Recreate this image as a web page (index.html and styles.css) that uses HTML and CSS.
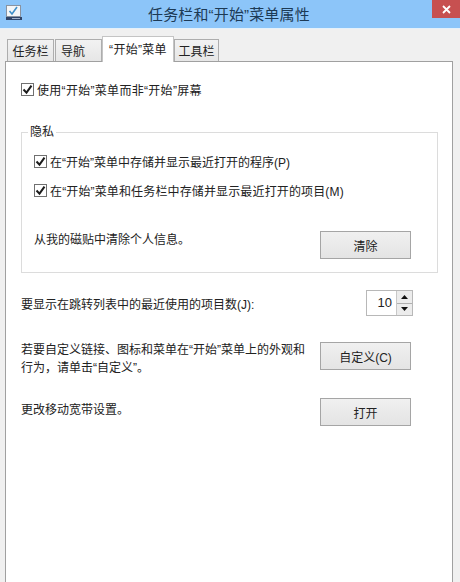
FILE: index.html
```html
<!DOCTYPE html>
<html lang="zh-CN">
<head>
<meta charset="utf-8">
<title>任务栏和“开始”菜单属性</title>
<link rel="stylesheet" href="styles.css">
</head>
<body>
<div class="window">
  <header class="titlebar">
    <svg class="app-icon" width="16" height="16" viewBox="0 0 16 16">
      <rect x="0.5" y="0.5" width="14" height="11" fill="#f4f6f8" stroke="#8a93a0"/>
      <path d="M3.5 6l2.5 3 5-7" fill="none" stroke="#3f8fc8" stroke-width="1.6"/>
      <rect x="0" y="12" width="16" height="3" fill="#2f4468"/>
      <rect x="6" y="13" width="8" height="1" fill="#9fb0c8"/>
    </svg>
    <h1 class="title">任务栏和“开始”菜单属性</h1>
    <button class="close" aria-label="关闭">
      <svg width="9" height="9" viewBox="0 0 9 9"><path d="M1 1l7 7M8 1l-7 7" stroke="#fff" stroke-width="1.8"/></svg>
    </button>
  </header>
  <nav class="tabs">
    <span class="tab tab-a">任务栏</span>
    <span class="tab tab-b">导航</span>
    <span class="tab active">“开始”菜单</span>
    <span class="tab tab-c">工具栏</span>
  </nav>
  <main class="panel">
    <label class="check first">
      <span class="box"><svg width="11" height="11" viewBox="0 0 11 11"><path d="M1.5 5.5l3 3.2 5-7" fill="none" stroke="#1c1c1c" stroke-width="2"/></svg></span>
      使用“开始”菜单而非“开始”屏幕
    </label>
    <section class="group">
      <span class="legend">隐私</span>
      <label class="check">
        <span class="box"><svg width="11" height="11" viewBox="0 0 11 11"><path d="M1.5 5.5l3 3.2 5-7" fill="none" stroke="#1c1c1c" stroke-width="2"/></svg></span>
        在“开始”菜单中存储并显示最近打开的程序(P)
      </label>
      <label class="check second">
        <span class="box"><svg width="11" height="11" viewBox="0 0 11 11"><path d="M1.5 5.5l3 3.2 5-7" fill="none" stroke="#1c1c1c" stroke-width="2"/></svg></span>
        在“开始”菜单和任务栏中存储并显示最近打开的项目(M)
      </label>
      <div class="row clear-row">
        <span class="line">从我的磁贴中清除个人信息。</span>
        <button class="btn">清除</button>
      </div>
    </section>
    <div class="row count-row">
      <span>要显示在跳转列表中的最近使用的项目数(J):</span>
      <div class="spin">
        <span class="spin-value">10</span>
        <span class="spin-arrows">
          <span class="arrow"><svg width="7" height="4" viewBox="0 0 7 4"><path d="M3.5 0L7 4H0z" fill="#111"/></svg></span>
          <span class="arrow"><svg width="7" height="4" viewBox="0 0 7 4"><path d="M0 0h7L3.5 4z" fill="#111"/></svg></span>
        </span>
      </div>
    </div>
    <div class="row custom-row">
      <span class="line wrap">若要自定义链接、图标和菜单在“开始”菜单上的外观和<br>行为，请单击“自定义”。</span>
      <button class="btn">自定义(C)</button>
    </div>
    <div class="row open-row">
      <span class="line open-text">更改移动宽带设置。</span>
      <button class="btn">打开</button>
    </div>
  </main>
</div>
</body>
</html>
```
FILE: styles.css
```css
* { box-sizing: border-box; }
html, body { margin: 0; height: 100%; }
body {
  width: 460px;
  height: 582px;
  overflow: hidden;
  font-family: "Liberation Sans", "Noto Sans CJK SC", sans-serif;
  font-size: 12px;
  color: #222;
  background: #f0f0f0;
}
.window { display: flex; flex-direction: column; height: 582px; }
.titlebar {
  height: 28px;
  flex: none;
  background: #8cc5f9;
  box-shadow: 0 1px 0 #e4f1fb;
  display: flex;
  align-items: flex-start;
  position: relative;
  padding: 5px 0 0 6px;
}
.app-icon { flex: none; }
.title {
  margin: -1px 0 0 126px;
  font-size: 15px;
  font-weight: 400;
  line-height: 22px;
  letter-spacing: 0.15px;
  color: #1d3a55;
  white-space: nowrap;
}
.close {
  position: absolute;
  top: 0;
  right: 0;
  width: 28px;
  height: 18px;
  padding: 0;
  border: 0;
  background: #c75050;
  display: flex;
  align-items: center;
  justify-content: center;
}
.tabs {
  flex: none;
  display: flex;
  align-items: flex-end;
  height: 34px;
  padding: 0 0 0 7px;
  position: relative;
  z-index: 1;
  margin-bottom: -1px;
}
.tab {
  height: 22px;
  border: 1px solid #adadad;
  border-bottom: 0;
  background: linear-gradient(#f2f2f2, #e6e6e6);
  display: flex;
  align-items: center;
  justify-content: center;
  margin-bottom: 1px;
}
.tab-a { width: 47px; margin-right: 1px; }
.tab-b { width: 47px; justify-content: flex-start; padding-left: 5px; }
.tab-c { width: 45px; }
.active {
  width: 72px;
  height: 26px;
  background: #fff;
  border-color: #c4c4c4;
  margin: 0;
  padding-bottom: 3px;
  letter-spacing: 0.3px;
}
.panel {
  flex: 1;
  margin: 0 7px 0 5px;
  background: #fff;
  border: 1px solid #a0a0a0;
  border-bottom: 0;
  padding: 19px 14px 0 15px;
}
.check { display: flex; align-items: center; gap: 3px; height: 16px; white-space: nowrap; }
.first { margin-bottom: 35px; letter-spacing: 0.3px; }
.second { margin-top: 13px; letter-spacing: 0.14px; }
.box {
  width: 13px;
  height: 13px;
  flex: none;
  border: 1px solid #707070;
  background: #fff;
  display: flex;
  align-items: center;
  justify-content: center;
}
.group {
  position: relative;
  height: 141px;
  border: 1px solid #dcdcdc;
  padding: 20px 12px 0;
}
.legend {
  position: absolute;
  top: -9px;
  left: 6px;
  padding: 0 2px;
  line-height: 16px;
  background: #fff;
}
.row { display: flex; align-items: flex-start; justify-content: space-between; }
.line { line-height: 18px; }
.clear-row { margin: 33px 14px 0 0; }
.count-row { margin: 17px 25px 0 0; align-items: center; }
.custom-row { margin: 26px 27px 0 0; }
.open-row { margin: 21px 27px 0 0; }
.wrap { margin-top: -1px; }
.open-text { margin-top: 3px; }
.btn {
  width: 91px;
  height: 28px;
  flex: none;
  padding: 0;
  font: inherit;
  color: #222;
  border: 1px solid #a5a5a5;
  background: linear-gradient(#f0f0f0, #e4e4e4);
}
.spin {
  width: 47px;
  height: 26px;
  border: 1px solid #b8b8b8;
  display: flex;
  background: #fff;
}
.spin-value { flex: 1; text-align: right; padding-right: 4px; line-height: 24px; font-size: 13px; }
.spin-arrows { width: 16px; display: flex; flex-direction: column; gap: 1px; background: #b0b0b0; border-left: 1px solid #c8c8c8; }
.arrow { flex: 1; background: #ececec; display: flex; align-items: center; justify-content: center; }
```
